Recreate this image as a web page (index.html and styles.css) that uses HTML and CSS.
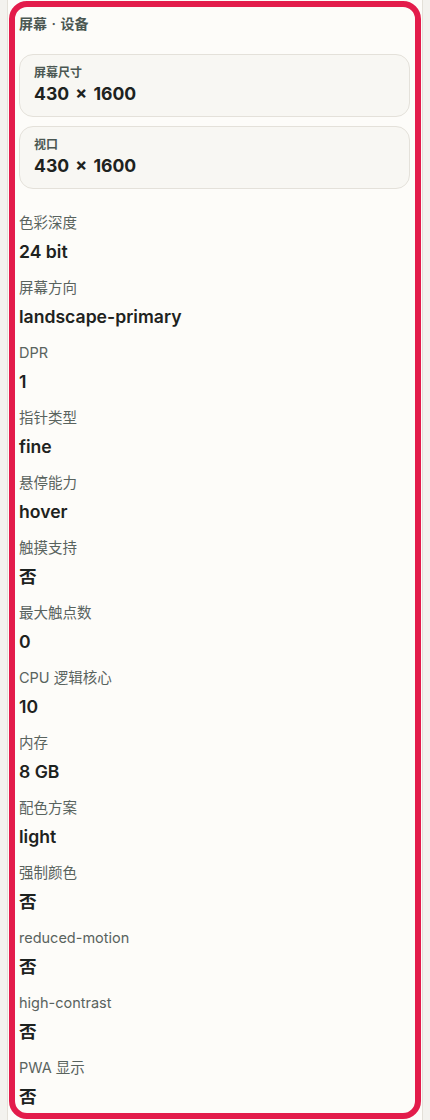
FILE: index.html
```html
<!DOCTYPE html>
<html lang="zh-CN">
<head>
    <meta charset="UTF-8">
    <meta name="viewport" content="width=device-width, initial-scale=1.0">
    <title>屏幕 · 设备</title>
    <link rel="stylesheet" href="styles.css">
</head>
<body>
    <div class="page">
        <section class="panel">
            <h3 class="panel-title">屏幕 · 设备</h3>

            <div class="stat">
                <div class="stat-label">屏幕尺寸</div>
                <div class="stat-value">430 × 1600</div>
            </div>
            <div class="stat">
                <div class="stat-label">视口</div>
                <div class="stat-value">430 × 1600</div>
            </div>

            <dl class="info">
                <div class="row"><dt>色彩深度</dt><dd>24 bit</dd></div>
                <div class="row"><dt>屏幕方向</dt><dd>landscape-primary</dd></div>
                <div class="row"><dt>DPR</dt><dd>1</dd></div>
                <div class="row"><dt>指针类型</dt><dd>fine</dd></div>
                <div class="row"><dt>悬停能力</dt><dd>hover</dd></div>
                <div class="row"><dt>触摸支持</dt><dd>否</dd></div>
                <div class="row"><dt>最大触点数</dt><dd>0</dd></div>
                <div class="row"><dt>CPU 逻辑核心</dt><dd>10</dd></div>
                <div class="row"><dt>内存</dt><dd>8 GB</dd></div>
                <div class="row"><dt>配色方案</dt><dd>light</dd></div>
                <div class="row"><dt>强制颜色</dt><dd>否</dd></div>
                <div class="row"><dt>reduced-motion</dt><dd>否</dd></div>
                <div class="row"><dt>high-contrast</dt><dd>否</dd></div>
                <div class="row"><dt>PWA 显示</dt><dd>否</dd></div>
            </dl>
        </section>
    </div>
</body>
</html>
```

FILE: styles.css
```css
body {
    margin: 0;
    background-color: #f3f2ee;
    font-family: Inter, "Noto Sans CJK SC", sans-serif;
    color: #1d2220;
}
.page {
    margin: 0 7px;
    padding: 1px 1px 0;
    min-height: 1119px;
    background-color: #fdfcf9;
    border-left: 1px solid #e3e0d8;
    border-right: 1px solid #e3e0d8;
}
.panel {
    border: 6px solid #e31c4b;
    border-radius: 18px;
    padding: 7px 5px 4px 4px;
    background-color: #fdfcf9;
}
.panel-title {
    margin: 0 0 20px;
    font-size: 14px;
    line-height: 20px;
    font-weight: 600;
    color: #4b5752;
    word-spacing: 1px;
}
.stat {
    margin-bottom: 9px;
    padding: 9px 14px;
    height: 43px;
    background-color: #f8f7f3;
    border: 1px solid #e4e1da;
    border-radius: 14px;
}
.stat-label {
    font-size: 12px;
    line-height: 18px;
    font-weight: 600;
    color: #4b5752;
}
.stat-value {
    font-size: 17.6px;
    line-height: 24px;
    font-weight: 700;
    color: #1d2220;
    word-spacing: 2px;
}
.info {
    margin: 25px 0 0;
}
.row {
    margin-bottom: 15px;
}
.row:last-child {
    margin-bottom: 0;
}
.info dt {
    font-size: 14.5px;
    line-height: 18px;
    color: #59635e;
}
.info dd {
    margin: 8px 0 0;
    font-size: 17.6px;
    line-height: 24px;
    font-weight: 600;
    color: #1d2220;
}
```
